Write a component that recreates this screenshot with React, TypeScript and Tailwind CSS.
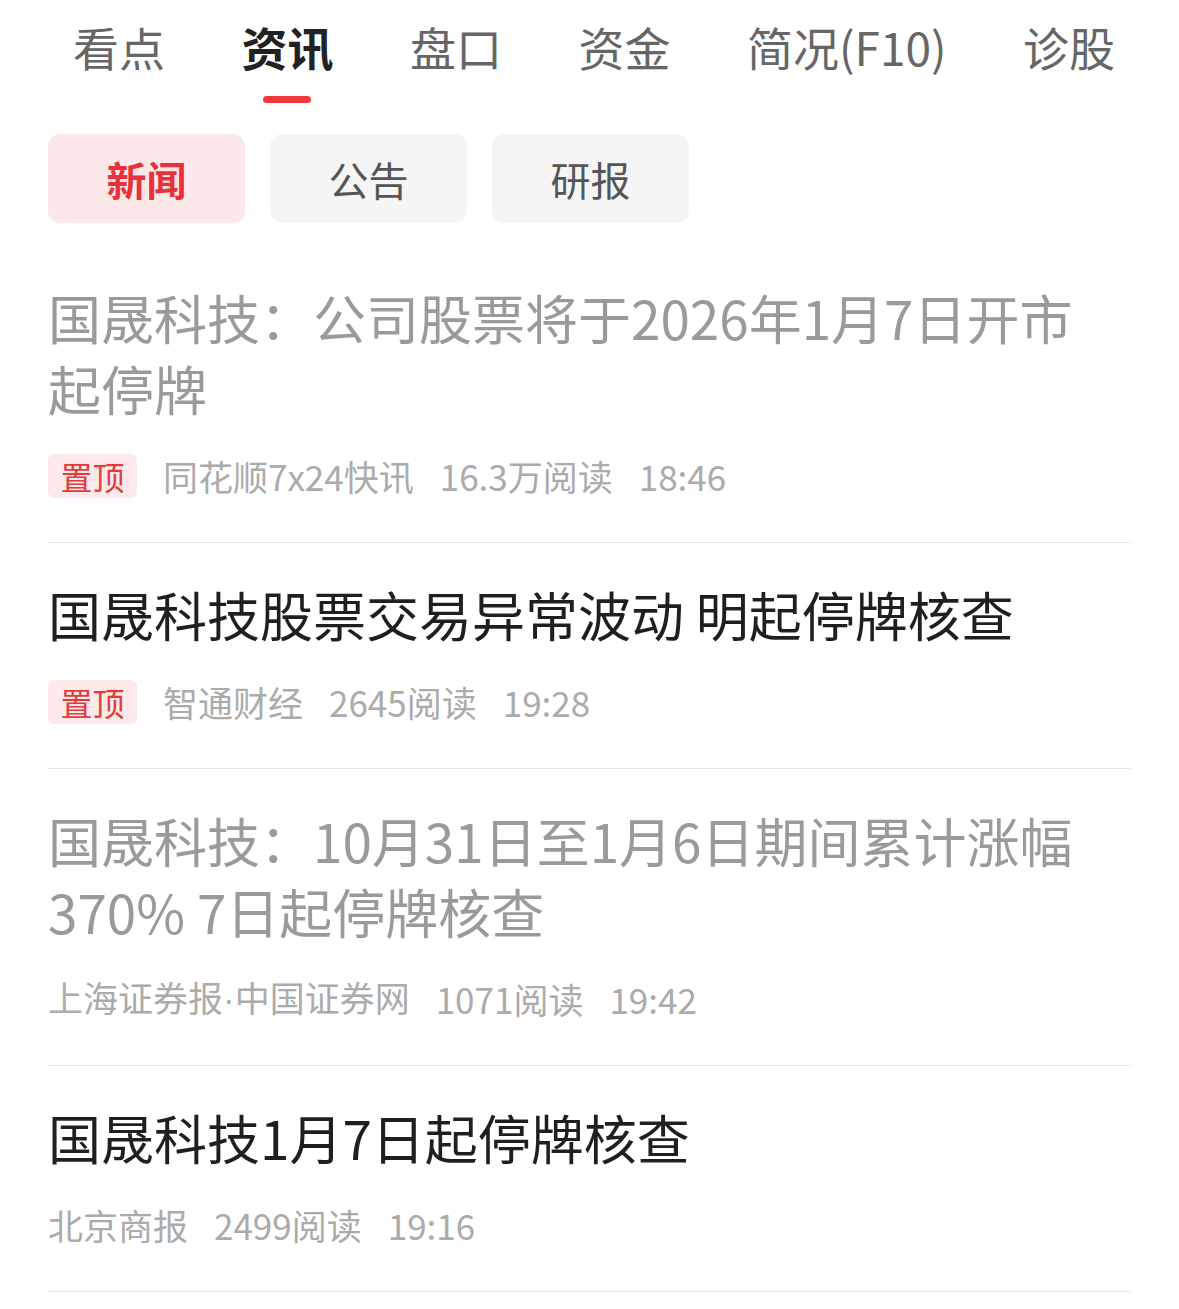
import React from "react";

const font = "font-['Noto_Sans_CJK_SC','Noto_Sans',sans-serif]";

const tabs = ["看点", "资讯", "盘口", "资金", "简况(F10)", "诊股"];
const subTabs = ["新闻", "公告", "研报"];

interface NewsItem {
  title: string;
  read: boolean;
  pinned?: boolean;
  source: string;
  views: string;
  time: string;
}

const news: NewsItem[] = [
  {
    title: "国晟科技：公司股票将于2026年1月7日开市起停牌",
    read: true,
    pinned: true,
    source: "同花顺7x24快讯",
    views: "16.3万阅读",
    time: "18:46",
  },
  {
    title: "国晟科技股票交易异常波动 明起停牌核查",
    read: false,
    pinned: true,
    source: "智通财经",
    views: "2645阅读",
    time: "19:28",
  },
  {
    title: "国晟科技：10月31日至1月6日期间累计涨幅370% 7日起停牌核查",
    read: true,
    source: "上海证券报·中国证券网",
    views: "1071阅读",
    time: "19:42",
  },
  {
    title: "国晟科技1月7日起停牌核查",
    read: false,
    source: "北京商报",
    views: "2499阅读",
    time: "19:16",
  },
];

// the middle dot in the CJK font is full width, the app uses a narrow one
function Source({ text }: { text: string }) {
  const parts = text.split("·");
  return (
    <span>
      {parts.map((p, i) => (
        <React.Fragment key={i}>
          {i > 0 && <span className="font-['Liberation_Sans',sans-serif]">·</span>}
          {p}
        </React.Fragment>
      ))}
    </span>
  );
}

function NewsRow({ item }: { item: NewsItem }) {
  return (
    <div className="border-b border-[#e8e8e8] pt-[36px] pb-[44px]">
      <h3
        className={`max-w-[1050px] text-[53px] leading-[71px] font-normal ${
          item.read ? "text-[#9a9a9a]" : "text-[#1f1f1f]"
        }`}
      >
        {item.title}
      </h3>
      <div className="mt-[30px] flex h-[44px] items-center gap-[26px] text-[35px] text-[#ababab]">
        {item.pinned && (
          <span className="flex h-[44px] w-[89px] items-center justify-center rounded-[6px] bg-[#fde9e9] text-[32px] text-[#e23b3b]">
            置顶
          </span>
        )}
        <Source text={item.source} />
        <span>{item.views}</span>
        <span>{item.time}</span>
      </div>
    </div>
  );
}

export default function App() {
  const active = 1;
  return (
    <div className={`min-h-[1309px] w-[1179px] bg-white ${font}`}>
      <div className="flex justify-between pl-[73px] pr-[64px] pt-[17px]">
        {tabs.map((t, i) => (
          <div key={t} className="flex flex-col items-center">
            <span
              className={`text-[46px] leading-[58px] ${
                i === active ? "font-bold text-[#222]" : "text-[#666]"
              }`}
            >
              {t}
            </span>
            <span
              className={`mt-[21px] h-[7px] w-[48px] rounded-full ${
                i === active ? "bg-[#f0393a]" : "bg-transparent"
              }`}
            />
          </div>
        ))}
      </div>

      <div className="mt-[31px] flex gap-[25px] px-[48px]">
        {subTabs.map((t, i) => (
          <button
            key={t}
            type="button"
            className={`flex h-[89px] w-[197px] items-center justify-center rounded-[12px] text-[40px] ${
              i === 0 ? "bg-[#fde8e9] font-bold text-[#e8313a]" : "bg-[#f5f5f5] text-[#555]"
            }`}
          >
            {t}
          </button>
        ))}
      </div>

      <div className="mt-[23px] px-[48px]">
        {news.map((n) => (
          <NewsRow key={n.title} item={n} />
        ))}
      </div>
    </div>
  );
}
